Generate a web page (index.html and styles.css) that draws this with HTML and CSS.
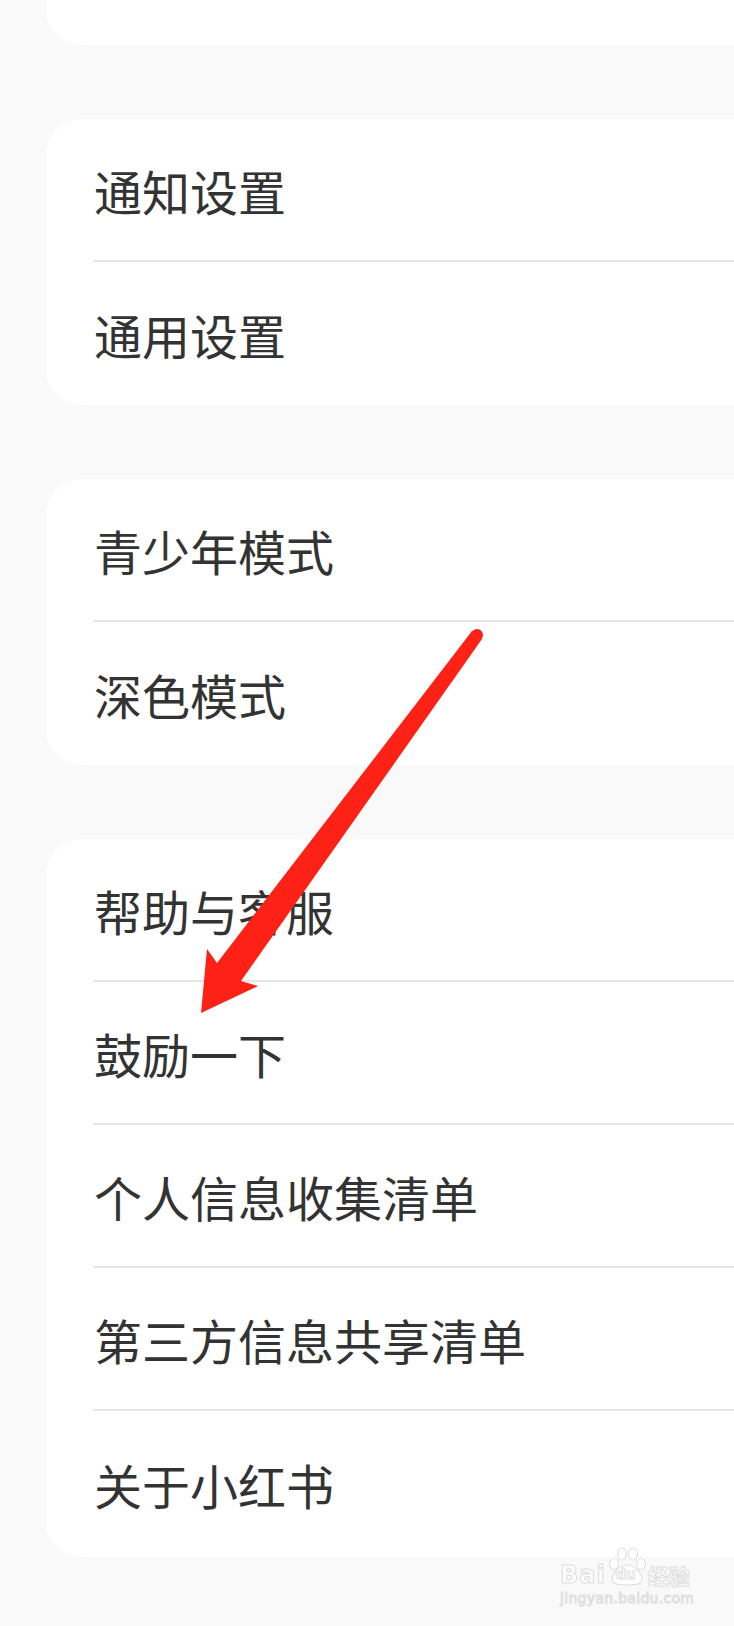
FILE: index.html
```html
<!DOCTYPE html>
<html lang="zh-CN">
<head>
    <meta charset="utf-8">
    <title>设置</title>

    <link rel="stylesheet" href="styles.css">
</head>
<body>
    <main class="settings">
        <section class="card card-tail"></section>

        <section class="card">
            <div class="row">通知设置</div>
            <div class="row">通用设置</div>
        </section>

        <section class="card">
            <div class="row">青少年模式</div>
            <div class="row">深色模式</div>
        </section>

        <section class="card card-last">
            <div class="row">帮助与客服</div>
            <div class="row">鼓励一下</div>
            <div class="row">个人信息收集清单</div>
            <div class="row">第三方信息共享清单</div>
            <div class="row">关于小红书</div>
        </section>
    </main>

    <!-- red annotation arrow drawn over the list -->
    <svg class="arrow" width="734" height="1626" viewBox="0 0 734 1626">
        <polygon fill="#fe2116" points="472,631 217,963 207,949 201,1013 258,986 241,981 482,639"/>
        <circle fill="#fe2116" cx="477" cy="635" r="6"/>
    </svg>

    <div class="watermark">
        <div class="wm-top">
            <span class="wm-bai">Bai</span>
            <span class="wm-paw">
                <svg width="42" height="40" viewBox="0 0 42 40">
                    <g fill="#fff" stroke="#e0e0e0" stroke-width="1.2">
                        <ellipse cx="8" cy="17" rx="4.5" ry="5.5"/>
                        <ellipse cx="16" cy="7" rx="4.5" ry="6"/>
                        <ellipse cx="27" cy="7" rx="4.5" ry="6"/>
                        <ellipse cx="35" cy="17" rx="4.5" ry="5.5"/>
                        <path d="M21 18 C14 18 6 26 6 32 C6 37 11 38 21 38 C31 38 36 37 36 32 C36 26 28 18 21 18 Z"/>
                    </g>
                </svg>
                <span class="wm-du">du</span>
            </span>
            <span class="wm-jy">经验</span>
        </div>
        <div class="wm-url">jingyan.baidu.com</div>
    </div>
</body>
</html>
```

FILE: styles.css
```css
body {
    margin: 0;
    width: 734px;
    height: 1626px;
    overflow: hidden;
    position: relative;

    background-color: #f9f9f9;
    color: #333333;
    font-family: "Noto Sans CJK SC", "Noto Sans", sans-serif;
}

.settings {
    display: flex;
    flex-direction: column;
    gap: 74px;
    padding-left: 46px;
}

.card {
    background-color: #ffffff;
    border-radius: 36px 0 0 36px;
}

.card-tail {
    height: 45px;
    border-radius: 0 0 0 36px;
}

.row {
    height: 143px;
    box-sizing: border-box;
    margin-left: 47px;
    padding-left: 1px;

    display: flex;
    align-items: center;

    font-size: 48px;
    line-height: 1;
    border-bottom: 2px solid #e6e6e6;
}

.row:last-child {
    border-bottom: none;
}

.card-last .row:last-child {
    height: 146px;
}

.arrow {
    position: absolute;
    top: 0;
    left: 0;
}

.watermark {
    position: absolute;
    left: 560px;
    top: 1547px;

    display: flex;
    flex-direction: column;
    align-items: flex-start;
    gap: 4px;
    font-family: "DejaVu Sans", sans-serif;
}

.wm-top {
    display: flex;
    align-items: flex-end;
}

.wm-bai,
.wm-jy,
.wm-url,
.wm-du {
    color: #ffffff;
    -webkit-text-stroke: 1px #dedede;
}

.wm-bai {
    font-size: 24px;
    font-weight: bold;
    line-height: 1;
    letter-spacing: 1px;
}

.wm-paw {
    position: relative;
    width: 42px;
    height: 40px;
}

.wm-du {
    position: absolute;
    left: 10px;
    top: 20px;
    font-size: 14px;
    font-weight: bold;
    line-height: 1;
}

.wm-jy {
    font-family: "Noto Sans CJK SC", sans-serif;
    font-size: 21px;
    font-weight: bold;
    line-height: 1;
    margin-bottom: 1px;
}

.wm-url {
    font-size: 14px;
    line-height: 1;
    letter-spacing: 0.3px;
}
```
